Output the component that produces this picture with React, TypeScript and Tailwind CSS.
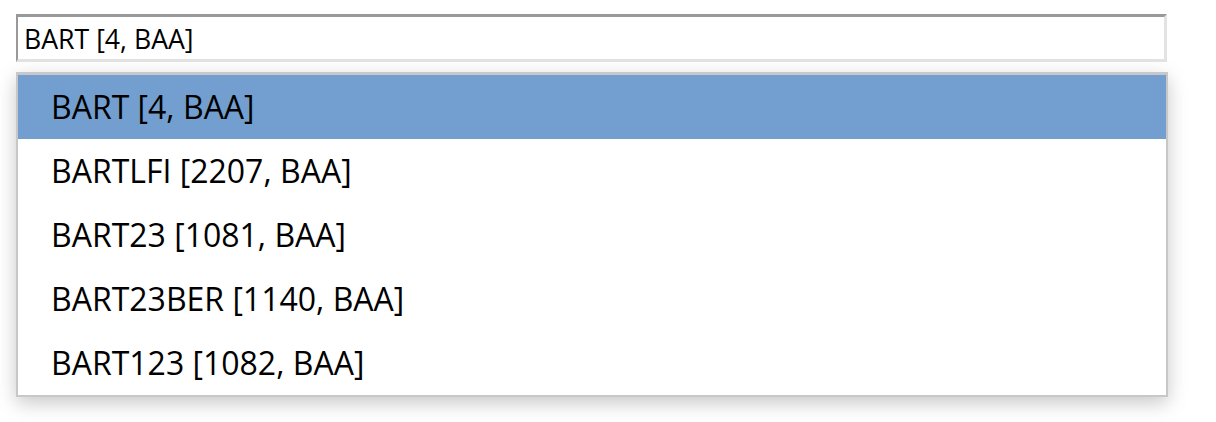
import { useState } from "react";

const options = [
  "BART [4, BAA]",
  "BARTLFI [2207, BAA]",
  "BART23 [1081, BAA]",
  "BART23BER [1140, BAA]",
  "BART123 [1082, BAA]",
];

export default function App() {
  const [value, setValue] = useState(options[0]);
  const [active, setActive] = useState(0);

  return (
    <div className="min-h-[422px] bg-white px-4 pt-[14px] font-['Open_Sans',sans-serif] text-black">
      <input
        value={value}
        onChange={(e) => setValue(e.target.value)}
        className="block h-[48px] w-[1151px] border-[3px] border-l-2 border-t-[#999999] border-l-[#999999] border-r-[#e3e3e3] border-b-[#e3e3e3] bg-white px-[6px] text-[26.67px] outline-none"
      />
      <ul className="mt-[10px] w-[1152px] border-2 border-t-[3px] border-[#c8c8c8] bg-white shadow-[0_6px_18px_rgba(0,0,0,0.22)]">
        {options.map((o, i) => (
          <li
            key={o}
            onMouseEnter={() => setActive(i)}
            onClick={() => setValue(o)}
            className={`flex h-[64px] items-center pl-[33px] text-[32px] ${
              i === active ? "bg-[#729fcf]" : ""
            }`}
          >
            {o}
          </li>
        ))}
      </ul>
    </div>
  );
}
